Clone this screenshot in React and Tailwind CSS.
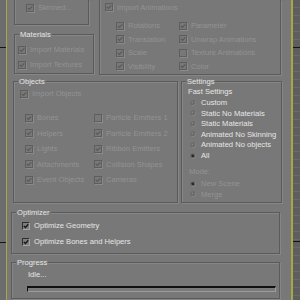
import React from "react";

function Check({ checked = true, enabled = false }) {
  if (enabled) {
    return (
      <span className="w-[8px] h-[8px] shrink-0 border border-t-[#2e2e2e] border-l-[#2e2e2e] border-b-[#a4a4a4] border-r-[#a4a4a4] bg-[#7e7e7e] flex items-center justify-center">
        {checked && (
          <svg width="6" height="6" viewBox="0 0 6 6">
            <path d="M0.8 2.9 L2.4 4.5 L5.3 1.3" fill="none" stroke="#151515" strokeWidth="1.3" />
          </svg>
        )}
      </span>
    );
  }
  return (
    <span className="w-[8px] h-[8px] shrink-0 border border-[#5e5e5e] shadow-[1px_1px_0_#8a8a8a] flex items-center justify-center">
      {checked && (
        <svg width="6" height="6" viewBox="0 0 6 6">
          <path d="M0.8 2.9 L2.4 4.5 L5.3 1.3" fill="none" stroke="#5a5a5a" strokeWidth="1.2" />
        </svg>
      )}
    </span>
  );
}

function Radio({ selected = false }) {
  return (
    <svg width="6" height="6" viewBox="0 0 6 6" className="shrink-0">
      <circle cx="3" cy="3" r="2.8" fill="#6a6a6a" />
      <path d="M5.4 1.6 A2.8 2.8 0 0 1 1.6 5.4" fill="none" stroke="#929292" strokeWidth="0.8" />
      <circle cx="2.4" cy="2.4" r="0.9" fill={selected ? "#1e1e1e" : "#858585"} />
      {selected && <circle cx="3" cy="3" r="1.3" fill="#2a2a2a" />}
    </svg>
  );
}

function CRow({ label, checked = true, enabled = false, className = "" }) {
  return (
    <div className={`flex items-center gap-[4px] ${className}`}>
      <Check checked={checked} enabled={enabled} />
      <span className={enabled ? "text-[#e6e6e6] whitespace-nowrap" : "text-[#939393] whitespace-nowrap"}>{label}</span>
    </div>
  );
}

function RRow({ label, selected = false, enabled = true }) {
  return (
    <div className="h-[10.6px] flex items-center gap-[5px]">
      <Radio selected={selected} />
      <span className={enabled ? "text-[#e6e6e6] whitespace-nowrap" : "text-[#939393] whitespace-nowrap"}>{label}</span>
    </div>
  );
}

function Group({ title, className = "", children }) {
  return (
    <div className={`relative border border-[#5b5b5b] shadow-[inset_1px_1px_0_#868686,1px_1px_0_#868686] ${className}`}>
      <span className="absolute left-[4px] top-[-1px] -translate-y-1/2 px-px bg-[#787878] text-[#e6e6e6] leading-[9px]">
        {title}
      </span>
      {children}
    </div>
  );
}

export default function App() {
  return (
    <div className="w-[300px] h-[300px] overflow-hidden flex bg-[#787878] font-['Liberation_Sans',Arial,sans-serif] text-[7.6px] leading-[9px]">
      <div className="w-[6px] shrink-0 bg-[#6c6c6c] flex flex-col">
        <div className="h-[47px]" />
        <div className="h-px bg-[#151515]" />
        <div className="h-[194px]" />
        <div className="h-px bg-[#151515]" />
      </div>
      <div className="w-px shrink-0 bg-[#a8a842]" />

      <div className="flex-1 flex flex-col">
        {/* Row A */}
        <div className="flex items-start">
          <div className="ml-[7px] w-[80px] flex flex-col">
            <div className="w-[75px] h-[25px] border border-t-0 border-[#5b5b5b] shadow-[inset_1px_0_0_#868686,1px_1px_0_#868686] pl-[11px]">
              <CRow label="Skinned..." className="h-[15px]" />
            </div>
            <Group title="Materials" className="mt-[9px] w-[80px] h-[40px] pl-[3px] pt-[7px]">
              <CRow label="Import Materials" className="h-[15px]" />
              <CRow label="Import Textures" className="h-[15px]" />
            </Group>
          </div>
          <div className="ml-[5px] w-[182px] h-[75px] border border-t-0 border-[#5b5b5b] shadow-[inset_1px_0_0_#868686,1px_1px_0_#868686] pl-[5px]">
            <CRow label="Import Animations" className="h-[14px]" />
            <div className="mt-[5px] pl-[11px] grid grid-cols-[63px_1fr] auto-rows-[13.5px]">
              <CRow label="Rotations" />
              <CRow label="Parameter" />
              <CRow label="Translation" />
              <CRow label="Unwrap Animations" />
              <CRow label="Scale" />
              <CRow label="Texture Animations" checked={false} />
              <CRow label="Visibility" />
              <CRow label="Color" />
            </div>
          </div>
        </div>

        {/* Row B */}
        <div className="mt-[6px] flex items-start">
          <Group title="Objects" className="ml-[6px] w-[165px] h-[122px] pt-[4px] pl-[6px]">
            <CRow label="Import Objects" className="h-[15px]" />
            <div className="mt-[9.3px] pl-[5px] grid grid-cols-[69px_1fr] auto-rows-[15.4px]">
              <CRow label="Bones" />
              <CRow label="Particle Emitters 1" checked={false} />
              <CRow label="Helpers" />
              <CRow label="Particle Emitters 2" />
              <CRow label="Lights" />
              <CRow label="Ribbon Emitters" />
              <CRow label="Attachments" />
              <CRow label="Collision Shapes" />
              <CRow label="Event Objects" />
              <CRow label="Cameras" />
            </div>
          </Group>
          <Group title="Settings" className="ml-[3px] w-[101px] h-[122px] pt-[4.7px] pl-[6px]">
            <div className="h-[10.6px] flex items-center text-[#e6e6e6]">Fast Settings</div>
            <div className="pl-[2px]">
              <RRow label="Custom" />
              <RRow label="Static No Materials" />
              <RRow label="Static Materials" />
              <RRow label="Animated No Skinning" />
              <RRow label="Animated No objects" />
              <RRow label="All" selected />
            </div>
            <div className="mt-[5.4px] pl-[1px] h-[10.6px] flex items-center text-[#939393]">Mode:</div>
            <div className="mt-[1.4px] pl-[2px]">
              <RRow label="New Scene" selected enabled={false} />
              <RRow label="Merge" enabled={false} />
            </div>
          </Group>
        </div>

        {/* Optimizer */}
        <Group title="Optimizer" className="mt-[9px] ml-[4px] w-[269px] h-[42px] pt-[4.5px] pl-[10px]">
          <CRow label="Optimize Geometry" enabled className="h-[16px]" />
          <CRow label="Optimize Bones and Helpers" enabled className="h-[16px]" />
        </Group>

        {/* Progress */}
        <Group title="Progress" className="mt-[8px] ml-[4px] w-[269px] h-[37px] pt-[6px] pl-[15px]">
          <div className="pl-px h-[10px] flex items-center text-[#e6e6e6]">Idle...</div>
          <div className="mt-[7px] w-[249px] h-[6px] border-t-2 border-l border-r border-b border-t-[#111111] border-l-[#111111] border-r-[#9c9c9c] border-b-[#9c9c9c] bg-[#7a7a7a]" />
        </Group>
      </div>

      <div className="w-[2px] shrink-0 bg-[#a8a842]" />
      <div className="w-[7px] shrink-0 flex flex-col bg-[repeating-linear-gradient(180deg,#5e5e5e_0px,#5e5e5e_7px,#6a6a6a_7px,#6a6a6a_8px)]">
        <div className="h-[47px]" />
        <div className="h-px bg-[#151515]" />
        <div className="h-[193px]" />
        <div className="h-px bg-[#151515]" />
      </div>
    </div>
  );
}
